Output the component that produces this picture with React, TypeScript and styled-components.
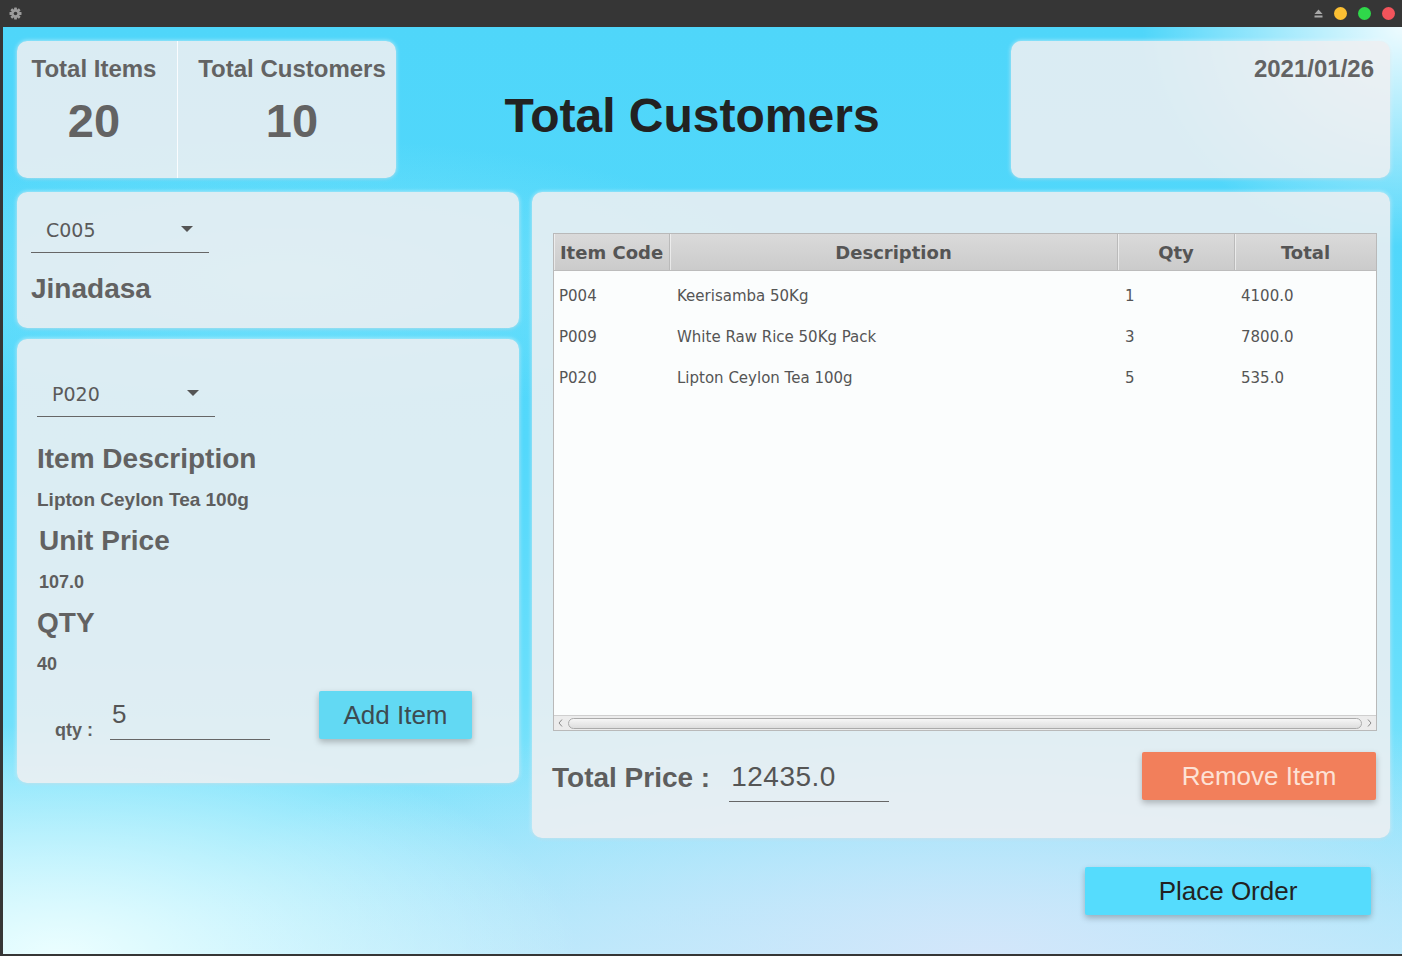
import React from "react";
import styled, { createGlobalStyle } from "styled-components";

const Global = createGlobalStyle`
  html, body { margin: 0; padding: 0; }
  body {
    background: #363636;
    font-family: "Liberation Sans", Arial, sans-serif;
    width: 1402px;
    height: 956px;
    overflow: hidden;
  }
  #root { height: 956px; }
  * { box-sizing: border-box; }
`;

const Window = styled.div`
  height: 956px;
  display: flex;
  flex-direction: column;
`;

const TitleBar = styled.div`
  height: 27px;
  flex: none;
  display: flex;
  align-items: center;
  justify-content: space-between;
  padding: 0 7px 0 9px;
  background: #363636;
`;

const TitleControls = styled.div`
  display: flex;
  align-items: center;
  gap: 11px;
`;

const Dot = styled.span<{ $color: string }>`
  width: 13px;
  height: 13px;
  border-radius: 50%;
  background: ${(p) => p.$color};
  display: block;
`;

const Content = styled.div`
  flex: 1;
  margin: 0 0 2px 3px;
  padding: 14px 12px 0 14px;
  display: flex;
  flex-direction: column;
  gap: 14px;
  background:
    radial-gradient(ellipse 260px 220px at 100% 0%, rgba(255, 255, 255, 0.9), rgba(255, 255, 255, 0) 100%),
    radial-gradient(ellipse 520px 230px at 4% 100%, rgba(238, 255, 255, 0.95), rgba(238, 255, 255, 0) 100%),
    radial-gradient(ellipse 820px 260px at 70% 100%, rgba(212, 230, 250, 0.97), rgba(212, 230, 250, 0) 100%),
    radial-gradient(ellipse 500px 140px at 20% 27%, rgba(150, 236, 252, 0.5), rgba(150, 236, 252, 0) 100%),
    linear-gradient(180deg, #4fd6fa 0%, #53d8fb 45%, #6adffb 72%, #a9eafc 100%);
`;

const TopRow = styled.div`
  display: grid;
  grid-template-columns: 379px 1fr 379px;
  height: 137px;
`;

const Card = styled.div`
  background: rgba(238, 239, 241, 0.88);
  border-radius: 10px;
  box-shadow: 0 0 4px rgba(255, 255, 255, 0.7), 0 1px 3px rgba(0, 60, 90, 0.12);
`;

const StatsCard = styled(Card)`
  display: flex;
`;

const StatSection = styled.div<{ $first?: boolean }>`
  display: flex;
  flex-direction: column;
  align-items: center;
  padding-top: 14px;
  ${(p) =>
    p.$first
      ? `width: 161px; padding-right: 6px; border-right: 1px solid rgba(255,255,255,0.85);`
      : `flex: 1; padding-left: 10px;`}
`;

const StatTitle = styled.div`
  font-size: 24px;
  line-height: 28px;
  font-weight: bold;
  color: #636363;
  white-space: nowrap;
`;

const StatNumber = styled.div`
  margin-top: 12px;
  font-size: 47px;
  line-height: 52px;
  font-weight: bold;
  color: #636363;
`;

const TitleArea = styled.div`
  display: flex;
  align-items: center;
  justify-content: center;
  padding: 13px 23px 0 0;
`;

const BigTitle = styled.h1`
  margin: 0;
  font-size: 48px;
  line-height: 56px;
  font-weight: bold;
  color: #222;
  white-space: nowrap;
`;

const DateCard = styled(Card)`
  display: flex;
  justify-content: flex-end;
  padding: 14px 16px 0 0;
`;

const DateText = styled.div`
  font-size: 24px;
  line-height: 28px;
  font-weight: bold;
  color: #636363;
`;

const BottomRow = styled.div`
  display: grid;
  grid-template-columns: 502px 1fr;
  column-gap: 13px;
  align-items: start;
`;

const LeftColumn = styled.div`
  display: flex;
  flex-direction: column;
  gap: 11px;
`;

const CustomerCard = styled(Card)`
  height: 136px;
  padding: 21px 14px 0;
  display: flex;
  flex-direction: column;
  align-items: flex-start;
`;

const ItemCard = styled(Card)`
  height: 444px;
  padding: 38px 20px 0;
  display: flex;
  flex-direction: column;
  align-items: flex-start;
`;

const Combo = styled.div`
  width: 178px;
  height: 40px;
  border-bottom: 1px solid #666;
  display: flex;
  align-items: center;
  justify-content: space-between;
  padding: 0 16px 5px 15px;
  font-family: "DejaVu Sans", sans-serif;
  font-size: 19px;
  color: #5a5a5a;
`;

const Arrow = styled.span`
  width: 0;
  height: 0;
  border-left: 6px solid transparent;
  border-right: 6px solid transparent;
  border-top: 6px solid #555;
  margin-top: -2px;
`;

const Name = styled.div`
  margin-top: 20px;
  font-size: 28px;
  line-height: 32px;
  font-weight: bold;
  color: #626262;
`;

const Heading = styled.div<{ $indent?: boolean; $gap: number }>`
  margin-top: ${(p) => p.$gap}px;
  margin-left: ${(p) => (p.$indent ? 2 : 0)}px;
  font-size: 28px;
  line-height: 32px;
  font-weight: bold;
  color: #626262;
`;

const Value = styled.div<{ $indent?: boolean; $size?: number }>`
  margin-top: 15px;
  margin-left: ${(p) => (p.$indent ? 2 : 0)}px;
  font-size: ${(p) => p.$size ?? 18}px;
  line-height: 20px;
  font-weight: bold;
  color: #5e5e5e;
`;

const QtyRow = styled.div`
  margin-top: 17px;
  height: 49px;
  display: flex;
  align-items: flex-end;
`;

const QtyLabel = styled.div`
  margin-left: 18px;
  font-size: 18px;
  line-height: 20px;
  font-weight: bold;
  color: #5e5e5e;
  white-space: nowrap;
`;

const QtyField = styled.div`
  margin-left: 17px;
  width: 160px;
  height: 46px;
  padding: 5px 0 0 2px;
  border-bottom: 1px solid #666;
  font-size: 26px;
  line-height: 30px;
  color: #555;
`;

const Button = styled.button<{ $bg: string; $fg: string; $w: number }>`
  width: ${(p) => p.$w}px;
  height: 48px;
  border: none;
  border-radius: 2px;
  background: ${(p) => p.$bg};
  color: ${(p) => p.$fg};
  font-family: "Liberation Sans", Arial, sans-serif;
  font-size: 26px;
  box-shadow: 0 3px 6px rgba(0, 0, 0, 0.25);
  padding: 0;
  cursor: pointer;
`;

const AddButton = styled(Button)`
  margin-left: 49px;
  margin-bottom: 1px;
`;

const RightColumn = styled.div`
  display: flex;
  flex-direction: column;
`;

const TableCard = styled(Card)`
  height: 646px;
  padding: 41px 13px 0 21px;
  display: flex;
  flex-direction: column;
`;

const Table = styled.div`
  height: 498px;
  border: 1px solid #b9b9b9;
  background: rgba(252, 253, 253, 0.96);
  display: flex;
  flex-direction: column;
`;

const cols = "116px 448px 117px 1fr";

const HeaderRow = styled.div`
  display: grid;
  grid-template-columns: ${cols};
  height: 37px;
  background: linear-gradient(180deg, #dadada 0%, #cbcbcb 100%);
  border-bottom: 1px solid #bcbcbc;
`;

const HeaderCell = styled.div<{ $last?: boolean }>`
  display: flex;
  align-items: center;
  justify-content: center;
  font-family: "DejaVu Sans", sans-serif;
  font-weight: bold;
  font-size: 18px;
  color: #555;
  white-space: nowrap;
  border-right: ${(p) => (p.$last ? "none" : "1px solid #bababa")};
  box-shadow: inset 1px 0 0 rgba(255, 255, 255, 0.55);
`;

const TableBody = styled.div`
  flex: 1;
  padding-top: 4px;
`;

const Row = styled.div`
  display: grid;
  grid-template-columns: ${cols};
  height: 41px;
  align-items: center;
`;

const Cell = styled.div<{ $pad: number }>`
  padding-left: ${(p) => p.$pad}px;
  font-family: "DejaVu Sans", sans-serif;
  font-size: 15px;
  color: #555;
  white-space: nowrap;
`;

const ScrollBar = styled.div`
  height: 15px;
  border-top: 1px solid #cfcfcf;
  background: #ececec;
  display: flex;
  align-items: center;
  padding: 0 4px;
  gap: 5px;
`;

const Thumb = styled.div`
  flex: 1;
  height: 11px;
  border: 1px solid #ababab;
  border-radius: 6px;
  background: linear-gradient(180deg, #f6f6f6 0%, #dedede 100%);
`;

const TotalRow = styled.div`
  margin-top: 21px;
  height: 50px;
  display: flex;
  align-items: center;
`;

const TotalLabel = styled.div`
  margin-left: -1px;
  font-size: 28px;
  line-height: 32px;
  font-weight: bold;
  color: #5e5e5e;
  margin-top: 2px;
  white-space: nowrap;
`;

const TotalValue = styled.div`
  margin-left: 19px;
  width: 160px;
  height: 50px;
  display: flex;
  align-items: center;
  padding: 1px 0 0 2px;
  border-bottom: 1px solid #666;
  font-size: 28px;
  letter-spacing: 0.5px;
  color: #555;
`;

const RemoveButton = styled(Button)`
  margin-left: auto;
  margin-right: 1px;
  align-self: flex-start;
`;

const PlaceButton = styled(Button)`
  align-self: flex-end;
  margin-top: 29px;
  margin-right: 19px;
`;

const rows = [
  ["P004", "Keerisamba 50Kg", "1", "4100.0"],
  ["P009", "White Raw Rice 50Kg Pack", "3", "7800.0"],
  ["P020", "Lipton Ceylon Tea 100g", "5", "535.0"],
];

const pads = [5, 7, 7, 6];

const Gear = () => (
  <svg width="13" height="13" viewBox="0 0 13 13">
    <g fill="#9c9c9c" transform="translate(6.5 6.5)">
      {[0, 45, 90, 135].map((a) => (
        <rect key={a} x="-1.4" y="-6" width="2.8" height="12" rx="0.5" transform={`rotate(${a})`} />
      ))}
      <circle r="4.2" />
    </g>
    <circle cx="6.5" cy="6.5" r="1.8" fill="#363636" />
  </svg>
);

const Eject = () => (
  <svg width="9" height="9" viewBox="0 0 9 9">
    <path d="M4.5 0.5 L8.5 5 L0.5 5 Z" fill="#a8a8a8" />
    <rect x="0.5" y="6.5" width="8" height="2" fill="#a8a8a8" />
  </svg>
);

const Chevron = ({ left }: { left?: boolean }) => (
  <svg width="5" height="8" viewBox="0 0 5 8">
    <path d={left ? "M4 0.5 L1 4 L4 7.5" : "M1 0.5 L4 4 L1 7.5"} stroke="#8a8a8a" strokeWidth="1" fill="none" />
  </svg>
);

export default function App() {
  return (
    <Window>
      <Global />
      <TitleBar>
        <Gear />
        <TitleControls>
          <Eject />
          <Dot $color="#fbbf33" />
          <Dot $color="#2fd84a" />
          <Dot $color="#f2545b" />
        </TitleControls>
      </TitleBar>
      <Content>
        <TopRow>
          <StatsCard>
            <StatSection $first>
              <StatTitle>Total Items</StatTitle>
              <StatNumber>20</StatNumber>
            </StatSection>
            <StatSection>
              <StatTitle>Total Customers</StatTitle>
              <StatNumber>10</StatNumber>
            </StatSection>
          </StatsCard>
          <TitleArea>
            <BigTitle>Total Customers</BigTitle>
          </TitleArea>
          <DateCard>
            <DateText>2021/01/26</DateText>
          </DateCard>
        </TopRow>
        <BottomRow>
          <LeftColumn>
            <CustomerCard>
              <Combo>
                <span>C005</span>
                <Arrow />
              </Combo>
              <Name>Jinadasa</Name>
            </CustomerCard>
            <ItemCard>
              <Combo>
                <span>P020</span>
                <Arrow />
              </Combo>
              <Heading $gap={26}>Item Description</Heading>
              <Value $size={19}>Lipton Ceylon Tea 100g</Value>
              <Heading $gap={15} $indent>
                Unit Price
              </Heading>
              <Value $indent>107.0</Value>
              <Heading $gap={15}>QTY</Heading>
              <Value>40</Value>
              <QtyRow>
                <QtyLabel>qty :</QtyLabel>
                <QtyField>5</QtyField>
                <AddButton $bg="#62d9f3" $fg="#3c4b52" $w={153}>
                  Add Item
                </AddButton>
              </QtyRow>
            </ItemCard>
          </LeftColumn>
          <RightColumn>
            <TableCard>
              <Table>
                <HeaderRow>
                  <HeaderCell>Item Code</HeaderCell>
                  <HeaderCell>Description</HeaderCell>
                  <HeaderCell>Qty</HeaderCell>
                  <HeaderCell $last>Total</HeaderCell>
                </HeaderRow>
                <TableBody>
                  {rows.map((r) => (
                    <Row key={r[0]}>
                      {r.map((c, i) => (
                        <Cell key={i} $pad={pads[i]}>
                          {c}
                        </Cell>
                      ))}
                    </Row>
                  ))}
                </TableBody>
                <ScrollBar>
                  <Chevron left />
                  <Thumb />
                  <Chevron />
                </ScrollBar>
              </Table>
              <TotalRow>
                <TotalLabel>Total Price :</TotalLabel>
                <TotalValue>12435.0</TotalValue>
                <RemoveButton $bg="#f27f5b" $fg="#fde2d6" $w={234}>
                  Remove Item
                </RemoveButton>
              </TotalRow>
            </TableCard>
            <PlaceButton $bg="#55dcfd" $fg="#222" $w={286}>
              Place Order
            </PlaceButton>
          </RightColumn>
        </BottomRow>
      </Content>
    </Window>
  );
}
